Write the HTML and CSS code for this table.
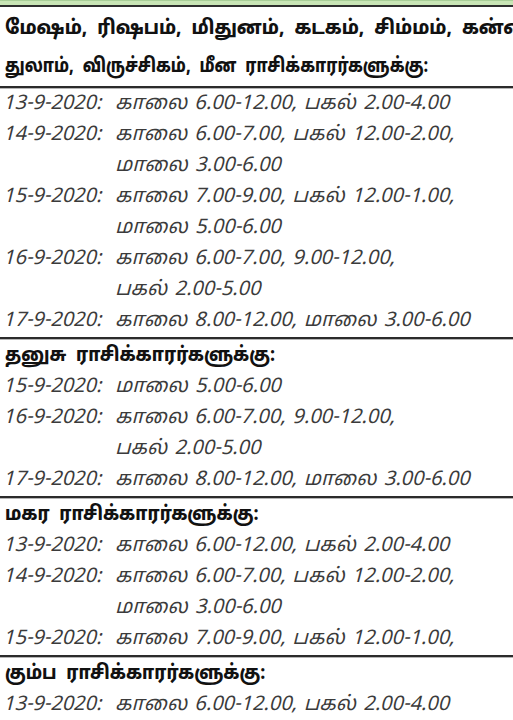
FILE: index.html
```html
<!DOCTYPE html>
<html lang="ta">
<head>
<meta charset="utf-8">
<title>ராசிக்காரர்களுக்கு</title>
<link rel="stylesheet" href="styles.css">
</head>
<body>
<div class="page">
  <div class="topbar"></div>

  <section class="group">
    <h2 class="head head-big">
      <span class="hline hline-1">மேஷம், ரிஷபம், மிதுனம், கடகம், சிம்மம், கன்னி,</span>
      <span class="hline hline-2">துலாம், விருச்சிகம், மீன ராசிக்காரர்களுக்கு:</span>
    </h2>
    <div class="rule"></div>
    <div class="entries">
      <div class="entry"><span class="date">13-9-2020:</span><span class="t">காலை 6.00-12.00, பகல் 2.00-4.00</span></div>
      <div class="entry"><span class="date">14-9-2020:</span><span class="t">காலை 6.00-7.00, பகல் 12.00-2.00,</span><span class="t">மாலை 3.00-6.00</span></div>
      <div class="entry"><span class="date">15-9-2020:</span><span class="t">காலை 7.00-9.00, பகல் 12.00-1.00,</span><span class="t">மாலை 5.00-6.00</span></div>
      <div class="entry"><span class="date">16-9-2020:</span><span class="t">காலை 6.00-7.00, 9.00-12.00,</span><span class="t">பகல் 2.00-5.00</span></div>
      <div class="entry"><span class="date">17-9-2020:</span><span class="t">காலை 8.00-12.00, மாலை 3.00-6.00</span></div>
    </div>
  </section>
  <div class="rule"></div>

  <section class="group">
    <h2 class="head"><span class="hline">தனுசு ராசிக்காரர்களுக்கு:</span></h2>
    <div class="entries">
      <div class="entry"><span class="date">15-9-2020:</span><span class="t">மாலை 5.00-6.00</span></div>
      <div class="entry"><span class="date">16-9-2020:</span><span class="t">காலை 6.00-7.00, 9.00-12.00,</span><span class="t">பகல் 2.00-5.00</span></div>
      <div class="entry"><span class="date">17-9-2020:</span><span class="t">காலை 8.00-12.00, மாலை 3.00-6.00</span></div>
    </div>
  </section>
  <div class="rule"></div>

  <section class="group">
    <h2 class="head"><span class="hline">மகர ராசிக்காரர்களுக்கு:</span></h2>
    <div class="entries">
      <div class="entry"><span class="date">13-9-2020:</span><span class="t">காலை 6.00-12.00, பகல் 2.00-4.00</span></div>
      <div class="entry"><span class="date">14-9-2020:</span><span class="t">காலை 6.00-7.00, பகல் 12.00-2.00,</span><span class="t">மாலை 3.00-6.00</span></div>
      <div class="entry"><span class="date">15-9-2020:</span><span class="t">காலை 7.00-9.00, பகல் 12.00-1.00,</span></div>
    </div>
  </section>
  <div class="rule"></div>

  <section class="group">
    <h2 class="head"><span class="hline">கும்ப ராசிக்காரர்களுக்கு:</span></h2>
    <div class="entries">
      <div class="entry"><span class="date">13-9-2020:</span><span class="t">காலை 6.00-12.00, பகல் 2.00-4.00</span></div>
    </div>
  </section>
</div>
</body>
</html>
```

FILE: styles.css
```css
html, body {
  margin: 0;
  padding: 0;
  background: #ffffff;
}

.page {
  width: 513px;
  height: 720px;
  overflow: hidden;
  white-space: nowrap;
  font-family: "Noto Sans Tamil", "Lohit Tamil", "Noto Sans", "DejaVu Sans", sans-serif;
}

.topbar {
  height: 4px;
  background: #c9e6b6;
  border-top: 1px solid #a9cf98;
  border-bottom: 2px solid #2e2e2e;
}

.head {
  margin: 0;
  padding: 0 0 0 5px;
  font-size: 20px;
  font-weight: 800;
  line-height: 32px;
  color: #111111;
  word-spacing: 6px;
}

.hline {
  display: inline-block;
  transform: scaleX(0.86);
  transform-origin: left center;
}

.head-big {
  display: flex;
  flex-direction: column;
  align-items: flex-start;
  padding-top: 3px;
}

.hline-1 {
  line-height: 39px;
  transform: scaleX(0.9);
}

.hline-2 {
  line-height: 37px;
  transform: scaleX(0.79);
}

.rule {
  height: 2px;
  background: #2b2b2b;
  border-bottom: 1px solid #b5b5b5;
}

.entries {
  display: flex;
  flex-direction: column;
}

.entry {
  display: grid;
  grid-template-columns: 112px auto;
  padding-left: 3px;
  font-style: italic;
  font-size: 20px;
  line-height: 31px;
  color: #3b3b3b;
  word-spacing: 2px;
}

.entry .date {
  grid-column: 1;
}

.entry .t {
  grid-column: 2;
}
```
